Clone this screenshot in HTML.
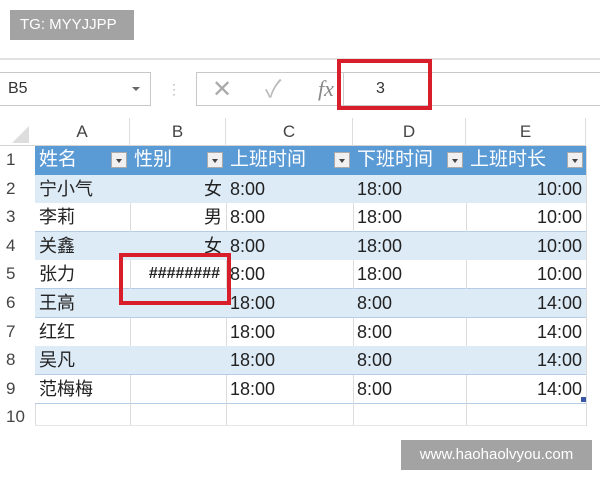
<!DOCTYPE html>
<html><head><meta charset="utf-8"><style>
body{margin:0;width:600px;height:480px;background:#fff;position:relative;overflow:hidden;font-family:"Liberation Sans","Noto Sans CJK SC",sans-serif;}
.a{position:absolute;box-sizing:border-box;}
.tag{background:#a3a3a3;color:#fff;font-size:15px;line-height:30px;padding-left:10px;}
.cell{position:absolute;box-sizing:border-box;font-size:18px;color:#222;line-height:28px;white-space:nowrap;overflow:visible;padding:0 4px;}
.r{text-align:right;}
.hd{color:#fff;font-size:19px;}
.dd{position:absolute;width:16px;height:16px;background:#f0f0f0;border:1px solid #aaa;box-sizing:border-box;}
.dd:after{content:"";position:absolute;left:4px;top:6px;border-left:3px solid transparent;border-right:3px solid transparent;border-top:4px solid #444;}
</style></head><body>
<div class="a tag" style="left:10px;top:10px;width:124px;height:30px;">TG: MYYJJPP</div>
<div class="a" style="left:0;top:58px;width:600px;height:2px;background:#e2e2e2"></div>
<div class="a" style="left:0;top:72px;width:151px;height:34px;border:1px solid #c8c8c8;border-left:none;font-size:16px;color:#333;line-height:32px;padding-left:8px;">B5</div>
<div class="a" style="left:132px;top:87px;border-left:4px solid transparent;border-right:4px solid transparent;border-top:4px solid #666;"></div>
<div class="a" style="left:172px;top:82px;color:#999;font-size:12px;line-height:5px;">·<br>·<br>·</div>
<div class="a" style="left:196px;top:72px;width:410px;height:34px;border:1px solid #c8c8c8;"></div>
<div class="a" style="left:212px;top:78px;color:#aaa;font-size:24px;line-height:24px;">✕</div>
<div class="a" style="left:265px;top:78px;color:#bbb;font-size:24px;line-height:24px;">✓</div>
<div class="a" style="left:318px;top:76px;color:#888;font-size:22px;font-style:italic;font-family:'Liberation Serif',serif;">fx</div>
<div class="a" style="left:343px;top:72px;width:1px;height:34px;background:#ccc"></div>
<div class="a" style="left:376px;top:80px;font-size:16px;color:#333;">3</div>

<div class="a" style="left:0;top:118px;width:586px;height:28px;border-bottom:1px solid #d4d4d4"></div>
<div class="a" style="left:12px;top:126px;border-left:17px solid transparent;border-bottom:17px solid #ddd;"></div>
<div id="grid"></div>
<script>
var cols=[35,130,226,353,466,586];var L=["A","B","C","D","E"];
var h='';
for(var i=0;i<5;i++){h+='<div class="cell" style="left:'+cols[i]+'px;top:118px;width:'+(cols[i+1]-cols[i])+'px;text-align:center;color:#444;font-size:17px;border-right:1px solid #ddd">'+L[i]+'</div>';}
var data=[["宁小气","女","8:00","18:00","10:00"],["李莉","男","8:00","18:00","10:00"],["关鑫","女","8:00","18:00","10:00"],["张力","########","8:00","18:00","10:00"],["王高","","18:00","8:00","14:00"],["红红","","18:00","8:00","14:00"],["吴凡","","18:00","8:00","14:00"],["范梅梅","","18:00","8:00","14:00"]];
function rowTop(n){return Math.round(146+(n-1)*28.6);}
for(var n=1;n<=10;n++){h+='<div class="cell" style="left:0;top:'+rowTop(n)+'px;width:35px;color:#444;font-size:17px;text-align:left;padding-left:6px;">'+n+'</div>';}
for(var i=0;i<6;i++){h+='<div class="a" style="left:'+cols[i]+'px;top:146px;width:1px;height:280px;background:#dcdcdc"></div>';}
h+='<div class="a" style="left:35px;top:146px;width:551px;height:29px;background:#5b9bd5"></div>';
var hd=["姓名","性别","上班时间","下班时间","上班时长"];
for(var i=0;i<5;i++){h+='<div class="cell hd" style="left:'+cols[i]+'px;top:146px;">'+hd[i]+'</div><div class="dd" style="left:'+(cols[i+1]-19)+'px;top:152px"></div>';}
for(var r=0;r<8;r++){var t=rowTop(r+2);var bg=(r%2==0)?'#ddebf7':'#fff';
h+='<div class="a" style="left:35px;top:'+t+'px;width:551px;height:29px;background:'+bg+';border-bottom:1px solid #b4cce6"></div>';
for(var c=0;c<5;c++){if(c>0&&r%2==1)h+='<div class="a" style="left:'+cols[c]+'px;top:'+t+'px;width:1px;height:29px;background:#dcdcdc"></div>';
var d=data[r][c];var cls=(c==1||c==4)?'cell r':'cell';
h+='<div class="'+cls+'" style="left:'+cols[c]+'px;top:'+t+'px;width:'+(cols[c+1]-cols[c])+'px;'+(c==1&&r==3?'font-size:16px;font-weight:bold;padding-right:6px;':'')+'">'+d+'</div>';}}
h+='<div class="a" style="left:35px;top:425px;width:551px;height:1px;background:#e6e6e6"></div>';
document.getElementById('grid').innerHTML=h;
</script>
<div class="a" style="left:337px;top:59px;width:95px;height:51px;border:4px solid #d81e2a;"></div>
<div class="a" style="left:581px;top:397px;width:5px;height:5px;background:#3a55a4"></div>
<div class="a" style="left:119px;top:253px;width:112px;height:52px;border:4px solid #d81e2a;"></div>
<div class="a" style="left:401px;top:440px;width:191px;height:30px;background:#a3a3a3;color:#fff;font-size:15px;line-height:30px;text-align:center;">www.haohaolvyou.com</div>
</body></html>
